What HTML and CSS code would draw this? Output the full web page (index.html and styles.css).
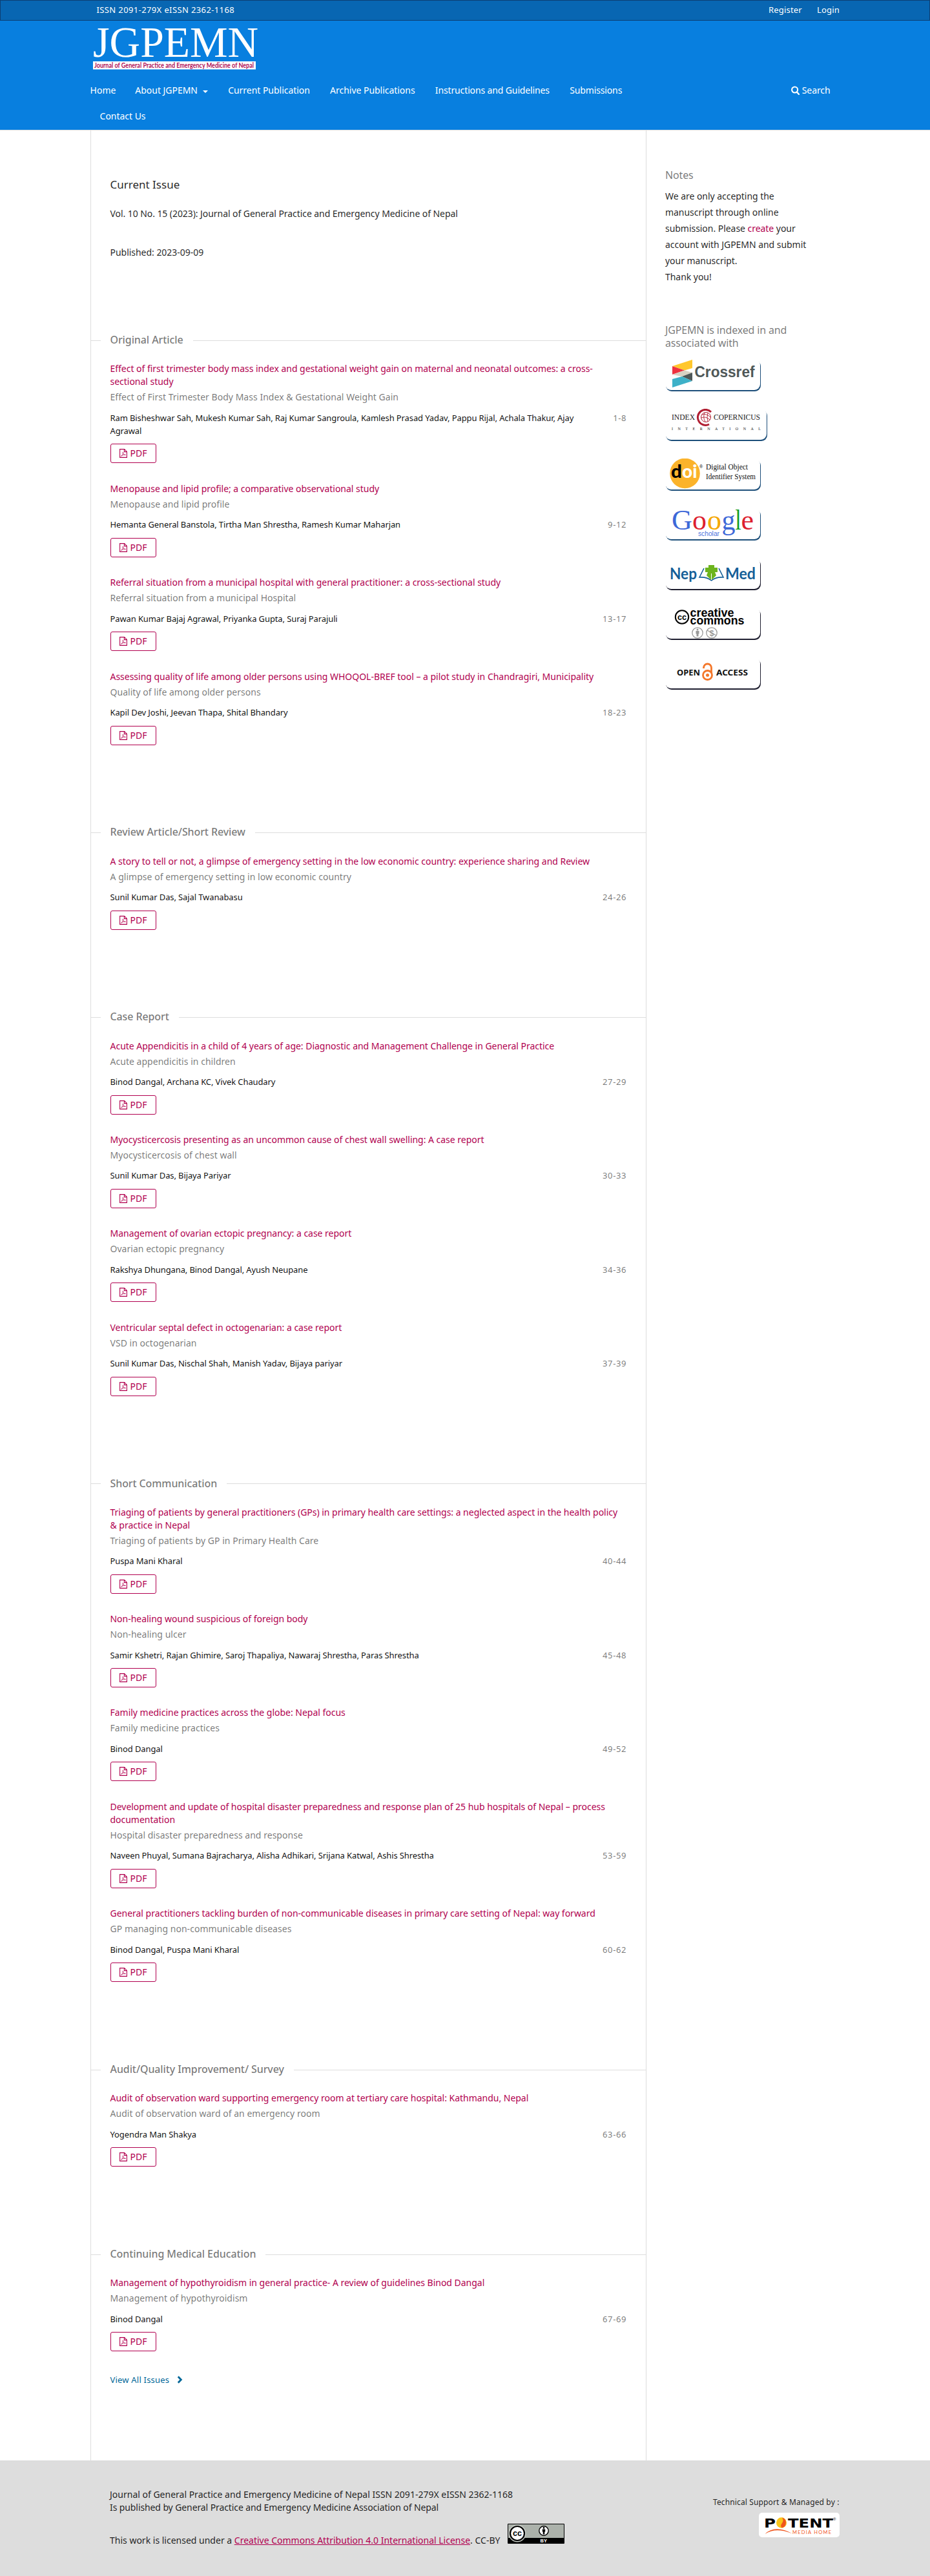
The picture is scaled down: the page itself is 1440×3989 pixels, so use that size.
FILE: index.html
```html
<!DOCTYPE html>
<html lang="en">
<head>
<meta charset="utf-8">
<title>Journal of General Practice and Emergency Medicine of Nepal</title>
<link rel="stylesheet" href="styles.css">
</head>
<body>
<svg class="sprite" aria-hidden="true">
  <symbol id="pdf" viewBox="0 0 12 14"><path d="M.6.6H7.6L11.4 4.4V13.4H.6ZM7.4.6V4.6H11.4" fill="none" stroke="currentColor" stroke-width="1.1"/><path d="M2.4 11.4C4.6 10.3 5.7 7.6 5.4 4.9C5.3 8 7 9.7 9.6 9.4C7.2 8.8 4.5 9.5 2.4 11.4Z" fill="none" stroke="currentColor" stroke-width=".7"/></symbol>
</svg>

<div class="topbar">
  <div class="wrap topbar-row">
    <span class="issn">ISSN 2091-279X eISSN 2362-1168</span>
    <span class="user-nav"><a>Register</a><a>Login</a></span>
  </div>
</div>

<header class="site-header">
  <div class="wrap">
    <svg class="logo" width="260" height="76" viewBox="0 0 260 76">
      <text x="4" y="56" textLength="256" lengthAdjust="spacingAndGlyphs" font-family="Liberation Serif, serif" font-size="68" fill="#fff">JGPEMN</text>
      <rect x="4" y="63" width="252" height="12.5" fill="#fff"/>
      <text x="6" y="73" textLength="247" lengthAdjust="spacingAndGlyphs" font-family="Lato, sans-serif" font-size="11" font-weight="bold" fill="#b01058">Journal of General Practice and Emergency Medicine of Nepal</text>
    </svg>
    <div class="nav-row">
      <nav class="main-nav">
        <a>Home</a><a>About JGPEMN<i class="caret"></i></a><a>Current Publication</a><a>Archive Publications</a><a class="wide">Instructions and Guidelines</a><a class="wide">Submissions</a><a>Contact Us</a>
      </nav>
      <a class="search"><svg width="13" height="14" viewBox="0 0 13 14"><circle cx="5.6" cy="6" r="4.5" fill="none" stroke="#fff" stroke-width="2.1"/><path d="M8.8 9.4L12 13" stroke="#fff" stroke-width="2.3" stroke-linecap="round"/></svg>Search</a>
    </div>
  </div>
</header>

<div class="wrap content">
  <main class="main">
    <h1>Current Issue</h1>
    <p class="volume">Vol. 10 No. 15 (2023): Journal of General Practice and Emergency Medicine of Nepal</p>
    <p class="published">Published: 2023-09-09</p>

    <section class="section">
      <h2>Original Article</h2>
      <article><h3>Effect of first trimester body mass index and gestational weight gain on maternal and neonatal outcomes: a cross-<br>sectional study</h3><p class="sub">Effect of First Trimester Body Mass Index &amp; Gestational Weight Gain</p><div class="meta"><span>Ram Bisheshwar Sah, Mukesh Kumar Sah, Raj Kumar Sangroula, Kamlesh Prasad Yadav, Pappu Rijal, Achala Thakur, Ajay<br>Agrawal</span><b>1-8</b></div><a class="pdf"><svg><use href="#pdf"/></svg>PDF</a></article>
      <article><h3>Menopause and lipid profile; a comparative observational study</h3><p class="sub">Menopause and lipid profile</p><div class="meta"><span>Hemanta General Banstola, Tirtha Man Shrestha, Ramesh Kumar Maharjan</span><b>9-12</b></div><a class="pdf"><svg><use href="#pdf"/></svg>PDF</a></article>
      <article><h3>Referral situation from a municipal hospital with general practitioner: a cross-sectional study</h3><p class="sub">Referral situation from a municipal Hospital</p><div class="meta"><span>Pawan Kumar Bajaj Agrawal, Priyanka Gupta, Suraj Parajuli</span><b>13-17</b></div><a class="pdf"><svg><use href="#pdf"/></svg>PDF</a></article>
      <article><h3>Assessing quality of life among older persons using WHOQOL-BREF tool – a pilot study in Chandragiri, Municipality</h3><p class="sub">Quality of life among older persons</p><div class="meta"><span>Kapil Dev Joshi, Jeevan Thapa, Shital Bhandary</span><b>18-23</b></div><a class="pdf"><svg><use href="#pdf"/></svg>PDF</a></article>
    </section>

    <section class="section">
      <h2>Review Article/Short Review</h2>
      <article><h3>A story to tell or not, a glimpse of emergency setting in the low economic country: experience sharing and Review</h3><p class="sub">A glimpse of emergency setting in low economic country</p><div class="meta"><span>Sunil Kumar Das, Sajal Twanabasu</span><b>24-26</b></div><a class="pdf"><svg><use href="#pdf"/></svg>PDF</a></article>
    </section>

    <section class="section">
      <h2>Case Report</h2>
      <article><h3>Acute Appendicitis in a child of 4 years of age: Diagnostic and Management Challenge in General Practice</h3><p class="sub">Acute appendicitis in children</p><div class="meta"><span>Binod Dangal, Archana KC, Vivek Chaudary</span><b>27-29</b></div><a class="pdf"><svg><use href="#pdf"/></svg>PDF</a></article>
      <article><h3>Myocysticercosis presenting as an uncommon cause of chest wall swelling: A case report</h3><p class="sub">Myocysticercosis of chest wall</p><div class="meta"><span>Sunil Kumar Das, Bijaya Pariyar</span><b>30-33</b></div><a class="pdf"><svg><use href="#pdf"/></svg>PDF</a></article>
      <article><h3>Management of ovarian ectopic pregnancy: a case report</h3><p class="sub">Ovarian ectopic pregnancy</p><div class="meta"><span>Rakshya Dhungana, Binod Dangal, Ayush Neupane</span><b>34-36</b></div><a class="pdf"><svg><use href="#pdf"/></svg>PDF</a></article>
      <article><h3>Ventricular septal defect in octogenarian: a case report</h3><p class="sub">VSD in octogenarian</p><div class="meta"><span>Sunil Kumar Das, Nischal Shah, Manish Yadav, Bijaya pariyar</span><b>37-39</b></div><a class="pdf"><svg><use href="#pdf"/></svg>PDF</a></article>
    </section>

    <section class="section">
      <h2>Short Communication</h2>
      <article><h3>Triaging of patients by general practitioners (GPs) in primary health care settings: a neglected aspect in the health policy<br>&amp; practice in Nepal</h3><p class="sub">Triaging of patients by GP in Primary Health Care</p><div class="meta"><span>Puspa Mani Kharal</span><b>40-44</b></div><a class="pdf"><svg><use href="#pdf"/></svg>PDF</a></article>
      <article><h3>Non-healing wound suspicious of foreign body</h3><p class="sub">Non-healing ulcer</p><div class="meta"><span>Samir Kshetri, Rajan Ghimire, Saroj Thapaliya, Nawaraj Shrestha, Paras Shrestha</span><b>45-48</b></div><a class="pdf"><svg><use href="#pdf"/></svg>PDF</a></article>
      <article><h3>Family medicine practices across the globe: Nepal focus</h3><p class="sub">Family medicine practices</p><div class="meta"><span>Binod Dangal</span><b>49-52</b></div><a class="pdf"><svg><use href="#pdf"/></svg>PDF</a></article>
      <article><h3>Development and update of hospital disaster preparedness and response plan of 25 hub hospitals of Nepal – process<br>documentation</h3><p class="sub">Hospital disaster preparedness and response</p><div class="meta"><span>Naveen Phuyal, Sumana Bajracharya, Alisha Adhikari, Srijana Katwal, Ashis Shrestha</span><b>53-59</b></div><a class="pdf"><svg><use href="#pdf"/></svg>PDF</a></article>
      <article><h3>General practitioners tackling burden of non-communicable diseases in primary care setting of Nepal: way forward</h3><p class="sub">GP managing non-communicable diseases</p><div class="meta"><span>Binod Dangal, Puspa Mani Kharal</span><b>60-62</b></div><a class="pdf"><svg><use href="#pdf"/></svg>PDF</a></article>
    </section>

    <section class="section">
      <h2>Audit/Quality Improvement/ Survey</h2>
      <article><h3>Audit of observation ward supporting emergency room at tertiary care hospital: Kathmandu, Nepal</h3><p class="sub">Audit of observation ward of an emergency room</p><div class="meta"><span>Yogendra Man Shakya</span><b>63-66</b></div><a class="pdf"><svg><use href="#pdf"/></svg>PDF</a></article>
    </section>

    <section class="section last">
      <h2>Continuing Medical Education</h2>
      <article><h3>Management of hypothyroidism in general practice- A review of guidelines Binod Dangal</h3><p class="sub">Management of hypothyroidism</p><div class="meta"><span>Binod Dangal</span><b>67-69</b></div><a class="pdf"><svg><use href="#pdf"/></svg>PDF</a></article>
    </section>
    <a class="view-all">View All Issues<svg width="9" height="12" viewBox="0 0 9 12"><path d="M1.8 1.2L6.4 6L1.8 10.8" fill="none" stroke="currentColor" stroke-width="2.8"/></svg></a>
  </main>

  <aside class="sidebar">
    <h4>Notes</h4>
    <p class="note">We are only accepting the<br>manuscript through online<br>submission. Please <a>create</a> your<br>account with JGPEMN and submit<br>your manuscript.<br>Thank you!</p>
    <h4>JGPEMN is indexed in and<br>associated with</h4>
    <div class="badges">
      <svg class="badge" viewBox="0 0 147 48">
        <path d="M11 11L42 1V14L30 17.5Z" fill="#ffc72c"/><path d="M11 11L30 17.5L11 24Z" fill="#ef3340"/><path d="M11 24L30 17.5L42 21L30 28Z" fill="#d8d2c4"/><path d="M42 21V34L26 27Z" fill="#4f5858"/><path d="M11 31L26 27L42 34L11 44Z" fill="#3eb1c8"/>
        <text x="45.5" y="28" textLength="93" lengthAdjust="spacingAndGlyphs" font-family="Liberation Sans, sans-serif" font-weight="bold" font-size="23" fill="#4f5858">Crossref</text>
      </svg>
      <svg class="badge badge-wide" viewBox="0 0 157 48">
        <g font-family="Liberation Serif, serif" fill="#222"><text x="10" y="17" textLength="36" lengthAdjust="spacingAndGlyphs" font-size="12.5">INDEX</text><text x="75" y="17" textLength="72" lengthAdjust="spacingAndGlyphs" font-size="12.5">COPERNICUS</text><text x="10" y="33" textLength="138" font-size="6">INTERNATIONAL</text></g>
        <g fill="none" stroke="#b01e32"><path d="M71 5A12 12 0 1 0 68 24" stroke-width="3"/><circle cx="63" cy="13" r="7.5" stroke-width="1"/><path d="M57 9Q64 7 70 13M56 14Q63 11 69 17M61 6Q58 14 62 20M66 6Q64 14 66 20" stroke-width=".9"/></g>
      </svg>
      <svg class="badge" viewBox="0 0 147 48">
        <circle cx="30.5" cy="23" r="23.3" fill="#fbb32b"/>
        <g font-family="Lato, sans-serif" font-weight="900" font-size="29"><text x="9" y="30" textLength="17" lengthAdjust="spacingAndGlyphs">d</text><text x="26" y="30" textLength="23.500" lengthAdjust="spacingAndGlyphs" fill="#fff">oi</text></g>
        <text x="53" y="14.5" font-family="Liberation Sans, sans-serif" font-size="7">®</text>
        <g font-family="Liberation Serif, serif" font-size="12.5" fill="#111"><text x="63" y="17" textLength="65" lengthAdjust="spacingAndGlyphs">Digital Object</text><text x="63" y="32" textLength="77" lengthAdjust="spacingAndGlyphs">Identifier System</text></g>
      </svg>
      <svg class="badge" viewBox="0 0 147 48">
        <g font-family="Liberation Serif, serif" font-size="44"><text x="10" y="32.5" textLength="32" lengthAdjust="spacingAndGlyphs" fill="#3d68d8">G</text><text x="42" y="32.5" fill="#dd1f30">o</text><text x="65" y="32.5" fill="#f5a800">o</text><text x="87.5" y="32.5" textLength="21" lengthAdjust="spacingAndGlyphs" fill="#3d68d8">g</text><text x="108.5" y="32.5" textLength="9" lengthAdjust="spacingAndGlyphs" fill="#109a20">l</text><text x="117.5" y="32.5" fill="#dd1f30">e</text></g>
        <text x="51" y="42.5" textLength="33" lengthAdjust="spacingAndGlyphs" font-family="Liberation Sans, sans-serif" font-size="10.5" fill="#4a72dc">scholar</text>
      </svg>
      <svg class="badge dark" viewBox="0 0 147 48">
        <g font-family="Lato, sans-serif" font-weight="bold" font-size="24" fill="#155f98"><text x="7" y="32.5" textLength="42" lengthAdjust="spacingAndGlyphs">Nep</text><text x="93" y="32.5" textLength="47" lengthAdjust="spacingAndGlyphs">Med</text></g>
        <path d="M60 16L53 30Q64 29 71.5 35Q79 29 90 30L83 16" fill="none" stroke="#155f98" stroke-width="1.6"/>
        <path d="M67 11H76V15H81V22H77L79 27L72 34L72 24L71 24V34L64 27L66 22H62V15H67Z" fill="#6cb41e"/>
      </svg>
      <svg class="badge dark" viewBox="0 0 147 48">
        <circle cx="26" cy="14.5" r="10.2" fill="none" stroke="#000" stroke-width="2"/>
        <g font-family="Liberation Sans, sans-serif" font-weight="bold"><text x="19" y="18.5" textLength="14" lengthAdjust="spacingAndGlyphs" font-size="12">cc</text><text x="38.5" y="14" textLength="68" lengthAdjust="spacingAndGlyphs" font-size="18">creative</text><text x="38.5" y="25.5" textLength="84" lengthAdjust="spacingAndGlyphs" font-size="18">commons</text></g>
        <g fill="none" stroke="#999" stroke-width="1.3"><circle cx="50" cy="39" r="8.2"/><circle cx="72" cy="39" r="8.2"/><path d="M65 35L79 43"/></g>
        <g fill="#999"><circle cx="50" cy="34" r="1.5"/><path d="M47.5 36H52.5V40.5H51.5V44.5H48.5V40.5H47.5Z"/><text x="68.8" y="43.5" font-family="Liberation Sans, sans-serif" font-size="12" font-weight="bold">$</text></g>
      </svg>
      <svg class="badge dark" viewBox="0 0 147 48">
        <g font-family="Noto Sans, sans-serif" font-weight="bold" font-size="12.5" fill="#111"><text x="18" y="28" textLength="36" lengthAdjust="spacingAndGlyphs">OPEN</text><text x="79" y="28" textLength="49" lengthAdjust="spacingAndGlyphs">ACCESS</text></g>
        <g fill="none" stroke="#f4772a" stroke-width="2.8"><circle cx="65.5" cy="27.5" r="7"/><path d="M59.5 17V16A6 6 0 0 1 71.5 16V24"/></g><circle cx="65.5" cy="27.5" r="2.5" fill="#f4772a"/>
      </svg>
    </div>
  </aside>
</div>

<footer class="footer">
  <div class="wrap footer-row">
    <div class="imprint">
      <p>Journal of General Practice and Emergency Medicine of Nepal ISSN 2091-279X eISSN 2362-1168</p>
      <p class="publisher">Is published by General Practice and Emergency Medicine Association of Nepal</p>
      <p class="license"><span>This work is licensed under a <a>Creative Commons Attribution 4.0 International License</a>. CC-BY</span>
        <svg width="88" height="31" viewBox="0 0 88 31"><rect width="88" height="31" rx="1"/><rect x="1" y="1" width="86" height="21" fill="#abb1aa"/><circle cx="15" cy="15" r="13.5" fill="#c9cec8"/><circle cx="15" cy="15" r="11" fill="#fff" stroke="#000" stroke-width="2.2"/><text x="8" y="19" textLength="14" lengthAdjust="spacingAndGlyphs" font-family="Liberation Sans, sans-serif" font-size="12" font-weight="bold">cc</text><circle cx="56" cy="11" r="7.2" fill="#fff" stroke="#000" stroke-width="1.4"/><circle cx="56" cy="6.5" r="1.4"/><path d="M53.8 8.5H58.2V12.5H57.3V16.5H54.7V12.5H53.8Z"/><text x="50.5" y="29.3" font-family="Liberation Sans, sans-serif" font-size="7.5" font-weight="bold" fill="#fff">BY</text></svg>
      </p>
    </div>
    <div class="support">
      <p>Technical Support &amp; Managed by :</p>
      <svg width="125" height="38" viewBox="0 0 125 38"><rect width="125" height="38" rx="5" fill="#fff"/><g font-family="DejaVu Sans, sans-serif" font-weight="bold" font-size="19.5"><text x="8" y="22.5" textLength="18" lengthAdjust="spacingAndGlyphs">P</text><text x="45" y="22.5" textLength="70" lengthAdjust="spacingAndGlyphs">TENT</text></g><ellipse cx="35" cy="15.5" rx="8" ry="8.3" fill="#f9c51c"/><path d="M36 7.5A8 8.3 0 0 1 36 23.5Q32 21 36 16Q39 12 36 7.5" fill="#f0561d"/><path d="M9.5 33Q25 18 52 32.5Q26 22 9.5 33" fill="#f0561d"/><text x="52" y="33" textLength="60" font-family="Lato, sans-serif" font-size="7.5" fill="#f0561d">MEDIA HOME</text><text x="115" y="12" font-family="Liberation Sans, sans-serif" font-size="6">®</text></svg>
    </div>
  </div>
</footer>
</body>
</html>
```
FILE: styles.css
```css
* { box-sizing: border-box; }
body {
  margin: 0;
  min-height: 3989px;
  display: flex;
  flex-direction: column;
  background: #fff;
  color: rgba(0, 0, 0, .87);
  font: 14px/20px "Noto Sans", sans-serif;
}
h1, h2, h3, h4, p { margin: 0; font-weight: 400; }
.sprite { display: none; }
.wrap { width: 1160px; margin: 0 auto; }

/* Header */
.topbar { height: 32px; border: 1px solid #0c3f73; background: #0866b2; color: #fff; font-size: 13px; }
.topbar-row { display: flex; justify-content: space-between; padding: 4px 0 0 9.5px; }
.issn { letter-spacing: .38px; }
.user-nav { display: flex; gap: 23px; letter-spacing: .2px; }
.site-header { height: 170px; background: #087fdf; border-bottom: 1px solid #ddd; color: #fff; letter-spacing: -.03px; }
.logo { display: block; width: 260px; height: 76px; overflow: visible; letter-spacing: 0; }
.nav-row { display: flex; justify-content: space-between; margin-top: 12px; }
.main-nav { display: flex; flex-wrap: wrap; width: 900px; margin-left: -15.4px; }
.main-nav a { display: flex; align-items: center; height: 40px; padding-right: 16.2px; padding-left: 15px; white-space: nowrap; }
.main-nav a:first-child { padding-right: 15px; }
.main-nav a:last-child { padding-left: 30px; }
.main-nav .wide { letter-spacing: -.13px; }
.caret { margin: 4px 0 0 8px; border: 4px solid transparent; border-top-color: #fff; border-bottom: 0; }
.search { display: flex; align-items: center; gap: 4px; height: 40px; margin-right: 14.5px; letter-spacing: -.1px; }

/* Page columns */
.content { flex: 1; display: flex; }
.main { width: 861px; padding-top: 74.4px; border: solid #ddd; border-width: 0 1px; }
h1, .volume, .published { padding-left: 29.5px; }
h1 { font-size: 17px; }
.volume { margin-top: 24.2px; letter-spacing: -.07px; }
.published { margin: 40px 0 115.7px; letter-spacing: -.03px; }

/* Table of contents */
.section { padding-bottom: 95.4px; }
.section.last { padding-bottom: 4.5px; }
h2 { display: flex; align-items: center; gap: 15px; margin-bottom: 25.2px; color: rgba(0, 0, 0, .54); font-size: 16px; font-weight: 500; letter-spacing: -.1px; }
h2::before, h2::after { content: ""; height: 1px; margin-top: 2px; background: #ddd; }
h2::before { width: 14.5px; }
h2::after { flex: 1; }
article { padding: 0 30px 29.4px 29.5px; }
h3 { margin-bottom: 4px; color: #b1004f; font-size: 14px; white-space: nowrap; letter-spacing: -.02px; }
.sub { margin-bottom: 11.5px; color: rgba(0, 0, 0, .54); letter-spacing: .03px; }
.meta { display: flex; justify-content: space-between; margin-bottom: 10.5px; color: rgba(0, 0, 0, .95); font-size: 13px; letter-spacing: -.11px; white-space: nowrap; }
.meta b { font-weight: 400; color: rgba(0, 0, 0, .54); letter-spacing: .6px; }
.pdf { display: flex; align-items: center; gap: 5px; width: 71px; height: 30px; padding-left: 13px; border: 1px solid #b1004f; border-radius: 3px; color: #b1004f; }
.pdf svg { width: 12px; height: 14px; }
.view-all { display: flex; align-items: center; gap: 12px; padding-left: 29.5px; color: #006798; font-size: 13px; letter-spacing: .2px; }

/* Sidebar */
.sidebar { padding: 59px 0 0 29px; }
h4 { color: rgba(0, 0, 0, .54); font-size: 16px; letter-spacing: -.16px; }
.note { margin: 9.7px 0 60.3px; line-height: 25px; letter-spacing: -.04px; }
.note a, .license a { color: #b1004f; }
.badges { display: flex; flex-direction: column; gap: 29px; margin-top: 15px; }
.badge { display: block; width: 147px; height: 48px; border-radius: 9px; box-shadow: 1px 2px 0 #1d4f7a; }
.badge-wide { width: 157px; }
.badge.dark { box-shadow: 1px 2px 0 #1f1f30; }

/* Footer */
.footer { height: 179px; background: #ddd; }
.footer-row { display: flex; justify-content: space-between; }
.imprint { padding: 43px 0 0 30px; }
.publisher { letter-spacing: -.1px; }
.license { display: flex; align-items: flex-end; gap: 12px; margin-top: 15px; }
.license span { margin-bottom: -4.5px; }
.license a { text-decoration: underline; }
.support { display: flex; flex-direction: column; align-items: flex-end; gap: 6px; padding: 54.7px .5px 0 0; font-size: 12px; letter-spacing: .13px; }
.support svg { letter-spacing: 0; }
```
